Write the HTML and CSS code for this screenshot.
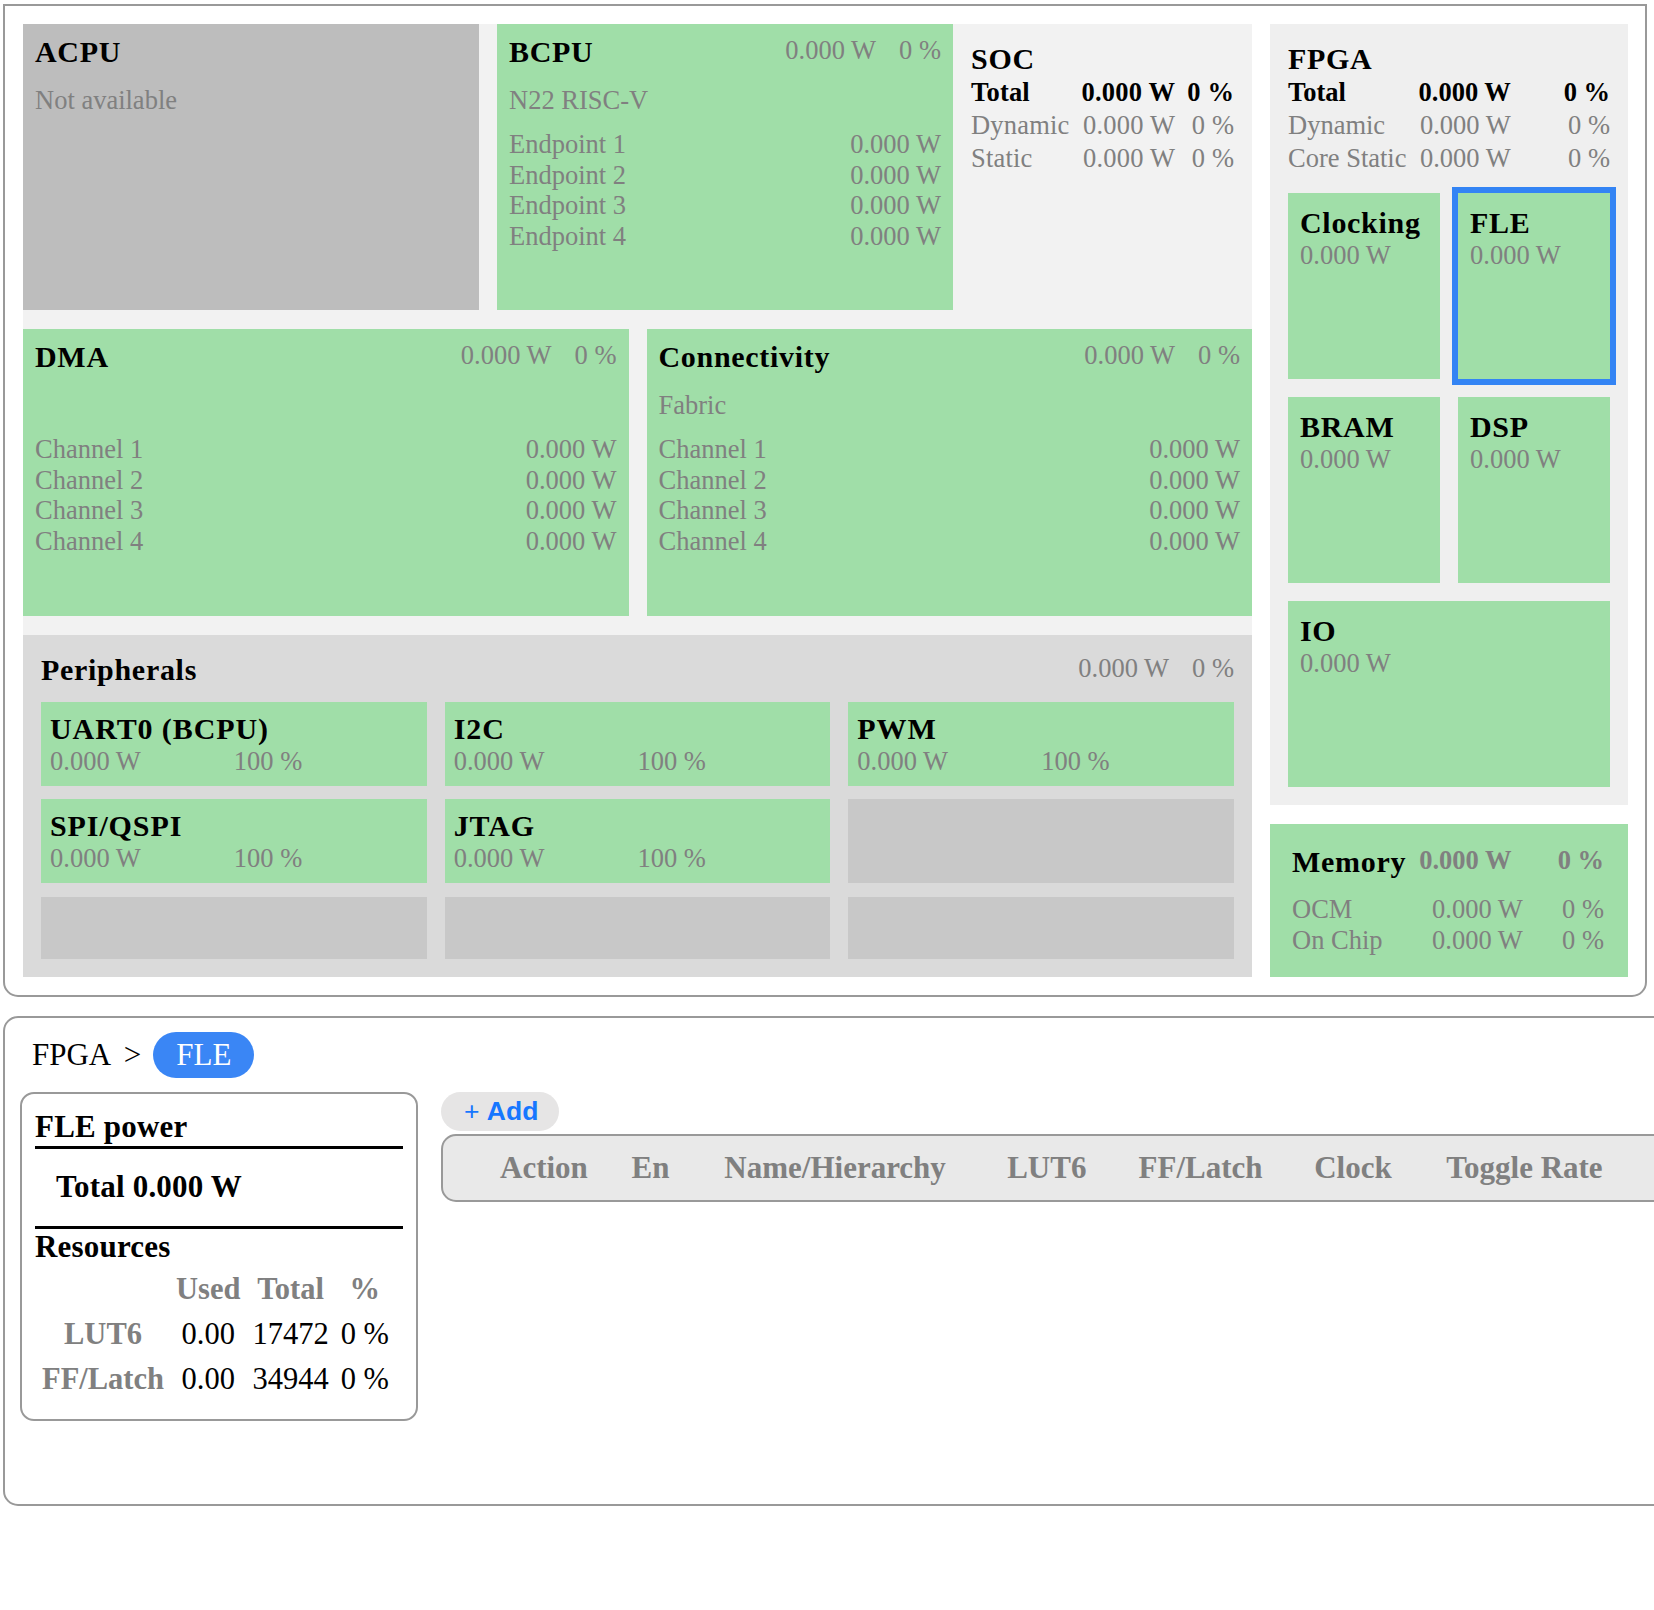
FILE: index.html
```html
<!DOCTYPE html>
<html>
<head>
<meta charset="utf-8">
<link rel="stylesheet" href="styles.css">
</head>
<body>
<div class="card overview">
  <div class="soc-area">
    <div class="row row1">
      <div class="tile na fixed">
        <div class="head"><h3 class="ttl">ACPU</h3></div>
        <div class="sub">Not available</div>
      </div>
      <div class="tile fixed">
        <div class="head"><h3 class="ttl">BCPU</h3><div class="pw"><span>0.000 W</span><span class="pct">0 %</span></div></div>
        <div class="sub">N22 RISC-V</div>
        <div class="list">
          <div class="li"><span>Endpoint 1</span><span>0.000 W</span></div>
          <div class="li"><span>Endpoint 2</span><span>0.000 W</span></div>
          <div class="li"><span>Endpoint 3</span><span>0.000 W</span></div>
          <div class="li"><span>Endpoint 4</span><span>0.000 W</span></div>
        </div>
      </div>
      <div class="soc">
        <h3 class="ttl">SOC</h3>
        <div class="sum soc-grid">
          <span class="b">Total</span><span class="b r">0.000 W</span><span class="b r">0 %</span>
          <span>Dynamic</span><span class="r">0.000 W</span><span class="r">0 %</span>
          <span>Static</span><span class="r">0.000 W</span><span class="r">0 %</span>
        </div>
      </div>
    </div>
    <div class="row row2">
      <div class="tile grow">
        <div class="head"><h3 class="ttl">DMA</h3><div class="pw"><span>0.000 W</span><span class="pct">0 %</span></div></div>
        <div class="sub"></div>
        <div class="list">
          <div class="li"><span>Channel 1</span><span>0.000 W</span></div>
          <div class="li"><span>Channel 2</span><span>0.000 W</span></div>
          <div class="li"><span>Channel 3</span><span>0.000 W</span></div>
          <div class="li"><span>Channel 4</span><span>0.000 W</span></div>
        </div>
      </div>
      <div class="tile grow">
        <div class="head"><h3 class="ttl">Connectivity</h3><div class="pw"><span>0.000 W</span><span class="pct">0 %</span></div></div>
        <div class="sub">Fabric</div>
        <div class="list">
          <div class="li"><span>Channel 1</span><span>0.000 W</span></div>
          <div class="li"><span>Channel 2</span><span>0.000 W</span></div>
          <div class="li"><span>Channel 3</span><span>0.000 W</span></div>
          <div class="li"><span>Channel 4</span><span>0.000 W</span></div>
        </div>
      </div>
    </div>
    <div class="periph">
      <div class="head"><h3 class="ttl">Peripherals</h3><div class="pw"><span>0.000 W</span><span class="pct">0 %</span></div></div>
      <div class="pgrid">
        <div class="ptile"><h3 class="ttl">UART0 (BCPU)</h3><div class="pvals"><span>0.000 W</span><span>100 %</span></div></div>
        <div class="ptile"><h3 class="ttl">I2C</h3><div class="pvals"><span>0.000 W</span><span>100 %</span></div></div>
        <div class="ptile"><h3 class="ttl">PWM</h3><div class="pvals"><span>0.000 W</span><span>100 %</span></div></div>
        <div class="ptile"><h3 class="ttl">SPI/QSPI</h3><div class="pvals"><span>0.000 W</span><span>100 %</span></div></div>
        <div class="ptile"><h3 class="ttl">JTAG</h3><div class="pvals"><span>0.000 W</span><span>100 %</span></div></div>
        <div class="ptile empty"></div>
        <div class="ptile empty"></div>
        <div class="ptile empty"></div>
        <div class="ptile empty"></div>
      </div>
    </div>
  </div>
  <div class="fpga-col">
    <div class="fpga">
      <h3 class="ttl">FPGA</h3>
      <div class="sum fpga-grid">
        <span class="b">Total</span><span class="b r">0.000 W</span><span class="b r">0 %</span>
        <span>Dynamic</span><span class="r">0.000 W</span><span class="r">0 %</span>
        <span>Core Static</span><span class="r">0.000 W</span><span class="r">0 %</span>
      </div>
      <div class="fgrid">
        <div class="ftile"><h3 class="ttl">Clocking</h3><div class="val">0.000 W</div></div>
        <div class="ftile sel"><h3 class="ttl">FLE</h3><div class="val">0.000 W</div></div>
        <div class="ftile"><h3 class="ttl">BRAM</h3><div class="val">0.000 W</div></div>
        <div class="ftile"><h3 class="ttl">DSP</h3><div class="val">0.000 W</div></div>
        <div class="ftile wide"><h3 class="ttl">IO</h3><div class="val">0.000 W</div></div>
      </div>
    </div>
    <div class="memory">
      <div class="mhead"><h3 class="ttl">Memory</h3><span class="mv">0.000 W</span><span class="mv r">0 %</span></div>
      <div class="mrows">
        <span>OCM</span><span>0.000 W</span><span class="r">0 %</span>
        <span>On Chip</span><span>0.000 W</span><span class="r">0 %</span>
      </div>
    </div>
  </div>
</div>

<div class="card detail">
  <div class="crumbs"><span>FPGA</span><span class="sep">&gt;</span><span class="pill">FLE</span></div>
  <div class="detail-body">
    <div class="fle-box">
      <div class="fb-title">FLE power</div>
      <div class="fb-total">Total 0.000 W</div>
      <div class="fb-res">Resources</div>
      <table class="res">
        <tr><th></th><th>Used</th><th>Total</th><th>%</th></tr>
        <tr><th>LUT6</th><td>0.00</td><td>17472</td><td>0 %</td></tr>
        <tr><th>FF/Latch</th><td>0.00</td><td>34944</td><td>0 %</td></tr>
      </table>
    </div>
    <div class="detail-main">
      <button class="add"><span class="plus">+</span>&nbsp;Add</button>
      <div class="thead">
        <span>Action</span><span>En</span><span>Name/Hierarchy</span><span>LUT6</span><span>FF/Latch</span><span>Clock</span><span>Toggle Rate</span>
      </div>
    </div>
  </div>
</div>
</body>
</html>
```

FILE: styles.css
```css
html, body {
  overflow: hidden;
}
body {
  margin: 0;
  background: #fff;
  font-family: "Liberation Serif", "Times New Roman", serif;
  font-size: 26.5px;
  line-height: 30.8px;
  color: #808080;
}
.card {
  box-sizing: border-box;
  border: 2px solid #999;
  margin-left: 3px;
}
.overview {
  margin-top: 4px;
  width: 1644px;
  border-radius: 0 0 15px 15px;
  padding: 18px 17px 18px 18px;
  display: flex;
  gap: 18px;
}
.ttl {
  margin: 0;
  font-size: 30px;
  line-height: 34px;
  font-weight: bold;
  letter-spacing: 0.7px;
  color: #000;
}
.soc-area {
  flex: 1;
  background: #f2f2f2;
  display: grid;
  grid-template-rows: 286px 287px 1fr;
  row-gap: 19px;
}
.row {
  display: flex;
  gap: 18px;
}
.tile {
  box-sizing: border-box;
  background: #a0dea8;
  padding: 11px 12px;
}
.tile.na {
  background: #bdbdbd;
}
.tile.fixed {
  width: 456px;
  flex: none;
}
.tile.grow {
  flex: 1;
}
.head {
  display: flex;
  justify-content: space-between;
  align-items: flex-start;
}
.pw {
  display: flex;
}
.pw .pct {
  margin-left: 23px;
}
.sub {
  margin-top: 16px;
  min-height: 30.8px;
}
.list {
  margin-top: 13px;
}
.li {
  display: flex;
  justify-content: space-between;
}
.soc {
  flex: 1;
  padding-top: 18px;
}
.sum {
  display: grid;
  column-gap: 12px;
  line-height: 33px;
}
.sum .b {
  color: #000;
  font-weight: bold;
}
.r {
  text-align: right;
}
.soc-grid {
  grid-template-columns: auto auto auto;
  justify-content: start;
  letter-spacing: 0.2px;
}
.fpga-grid {
  grid-template-columns: auto auto 1fr;
}
.periph {
  background: #dadada;
  padding: 18px;
}
.pgrid {
  margin-top: 15px;
  display: grid;
  grid-template-columns: repeat(3, 1fr);
  column-gap: 18px;
  row-gap: 13.5px;
}
.ptile {
  background: #a0dea8;
  padding: 9.5px 9px;
}
.ptile .ttl {
  letter-spacing: 0.9px;
}
.ptile.empty {
  background: #c8c8c8;
  min-height: 62px;
  box-sizing: border-box;
}
.pvals {
  display: grid;
  grid-template-columns: 1fr 1fr;
}
.fpga-col {
  width: 358px;
  flex: none;
  display: flex;
  flex-direction: column;
  gap: 19px;
}
.fpga {
  background: #efefef;
  padding: 18px;
}
.fgrid {
  margin-top: 18px;
  display: grid;
  grid-template-columns: 1fr 1fr;
  grid-auto-rows: 186px;
  gap: 18px;
}
.ftile {
  background: #a0dea8;
  padding: 13px 12px;
}
.ftile.sel {
  outline: 6px solid #3384f4;
}
.ftile.wide {
  grid-column: span 2;
}
.memory {
  background: #a0dea8;
  padding: 21px 24px 21px 22px;
}
.mhead {
  display: grid;
  grid-template-columns: auto auto 1fr;
  column-gap: 13px;
  align-items: start;
}
.mv {
  font-weight: bold;
}
.mrows {
  margin-top: 15px;
  display: grid;
  grid-template-columns: 140px auto 1fr;
}

/* detail card */
.detail {
  margin-top: 19px;
  width: 1800px;
  height: 490px;
  border-radius: 15px;
  padding: 14px 15px;
}
.crumbs {
  display: flex;
  align-items: center;
  height: 46px;
  padding-left: 12px;
  font-size: 31px;
  line-height: 35.5px;
  color: #000;
  margin-bottom: 14px;
}
.sep {
  margin-left: 12.5px;
}
.pill {
  margin-left: 12px;
  height: 46px;
  display: flex;
  align-items: center;
  padding: 0 23px;
  border-radius: 23px;
  background: #3a86f5;
  color: #fff;
}
.detail-body {
  display: flex;
  align-items: flex-start;
  gap: 23px;
}
.fle-box {
  width: 398px;
  flex: none;
  box-sizing: border-box;
  border: 2px solid #999;
  border-radius: 14px;
  padding: 15px 13px 18px;
  color: #000;
  font-size: 31px;
  line-height: 35.5px;
  font-weight: bold;
  letter-spacing: 0.2px;
}
.fb-title {
  padding-bottom: 1.5px;
  border-bottom: 3px solid #000;
}
.fb-total {
  padding: 20px 0 22px 21px;
  border-bottom: 3px solid #000;
}
.fb-res {
  margin-bottom: 3px;
}
.res {
  border-collapse: separate;
  border-spacing: 2px 0;
  font-size: 30.5px;
  line-height: 35px;
  letter-spacing: 0;
}
.res th,
.res td {
  padding: 4.8px 5px;
  text-align: center;
}
.res th {
  color: #808080;
  font-weight: bold;
}
.res td {
  font-weight: normal;
  color: #000;
}
.detail-main {
  flex: 1;
  display: flex;
  flex-direction: column;
  align-items: flex-start;
}
.add {
  display: inline-flex;
  align-items: center;
  height: 39px;
  padding: 0 21px 0 23px;
  margin: 0 0 3px 0;
  border: none;
  border-radius: 20px;
  background: #e6e5e5;
  color: #1677ff;
  font-family: "Liberation Sans", Arial, sans-serif;
  font-size: 26.5px;
  font-weight: bold;
}
.add .plus {
  font-weight: normal;
}
.thead {
  align-self: stretch;
  box-sizing: border-box;
  height: 68px;
  border: 2px solid #999;
  border-radius: 15px;
  background: #e9e9e9;
  display: flex;
  align-items: center;
  white-space: nowrap;
  font-size: 31px;
  line-height: 35.5px;
  font-weight: bold;
  color: #808080;
}
.thead span:nth-child(1) { margin-left: 57px; }
.thead span:nth-child(2) { margin-left: 43.7px; }
.thead span:nth-child(3) { margin-left: 54.9px; }
.thead span:nth-child(4) { margin-left: 61.3px; }
.thead span:nth-child(5) { margin-left: 52.2px; }
.thead span:nth-child(6) { margin-left: 51.6px; }
.thead span:nth-child(7) { margin-left: 54.5px; }
```
